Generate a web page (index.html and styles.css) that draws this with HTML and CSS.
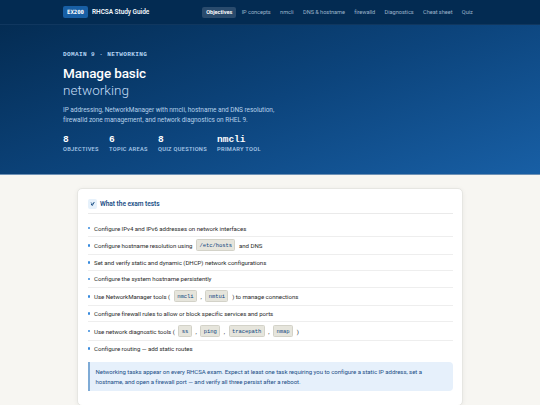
FILE: index.html
```html
<!DOCTYPE html>
<html lang="en">
<head>
    <meta charset="UTF-8">
    <meta name="viewport" content="width=device-width, initial-scale=1.0">
    <title>RHCSA Study Guide - Manage basic networking</title>
    <link rel="stylesheet" href="styles.css">
</head>
<body>
    <nav class="topbar">
        <div class="topbar-inner">
            <span class="badge">EX200</span>
            <span class="brand">RHCSA Study Guide</span>
            <div class="nav-links">
                <a class="active">Objectives</a>
                <a>IP concepts</a>
                <a>nmcli</a>
                <a>DNS &amp; hostname</a>
                <a>firewalld</a>
                <a>Diagnostics</a>
                <a>Cheat sheet</a>
                <a>Quiz</a>
            </div>
        </div>
    </nav>

    <header class="hero">
        <div class="hero-inner">
            <div class="eyebrow">DOMAIN 9 · NETWORKING</div>
            <h1>Manage basic<br><span>networking</span></h1>
            <p>IP addressing, NetworkManager with nmcli, hostname and DNS resolution,<br>firewalld zone management, and network diagnostics on RHEL 9.</p>
            <div class="stats">
                <div class="stat"><b>8</b><small>OBJECTIVES</small></div>
                <div class="stat"><b>6</b><small>TOPIC AREAS</small></div>
                <div class="stat"><b>8</b><small>QUIZ QUESTIONS</small></div>
                <div class="stat"><b>nmcli</b><small>PRIMARY TOOL</small></div>
            </div>
        </div>
    </header>

    <main class="card">
        <div class="card-head">
            <span class="check">
                <svg viewBox="0 0 10 10"><path d="M2 5.4 4.1 8.2 7.8 1.8M2 2.8 4.1 5.2"/></svg>
            </span>
            <h2>What the exam tests</h2>
        </div>
        <ul class="objectives">
            <li>Configure IPv4 and IPv6 addresses on network interfaces</li>
            <li class="tall">Configure hostname resolution using <code>/etc/hosts</code> and DNS</li>
            <li>Set and verify static and dynamic (DHCP) network configurations</li>
            <li>Configure the system hostname persistently</li>
            <li class="tall">Use NetworkManager tools ( <code>nmcli</code> , <code>nmtui</code> ) to manage connections</li>
            <li>Configure firewall rules to allow or block specific services and ports</li>
            <li class="tall">Use network diagnostic tools ( <code>ss</code> , <code>ping</code> , <code>tracepath</code> , <code>nmap</code> )</li>
            <li>Configure routing — add static routes</li>
        </ul>
        <div class="callout">Networking tasks appear on every RHCSA exam. Expect at least one task requiring you to configure a static IP address, set a<br>hostname, and open a firewall port — and verify all three persist after a reboot.</div>
    </main>
</body>
</html>
```
FILE: styles.css
```css
* {
    box-sizing: border-box;
}
body {
    margin: 0;
    background: #f7f6f2;
    font-family: Roboto, "Liberation Sans", sans-serif;
    font-size: 6.1px;
    letter-spacing: -0.05px;
    color: #2b2b2b;
}
.topbar {
    height: 25px;
    background: #032b52;
    border-bottom: 1px solid #10375f;
}
.topbar-inner,
.hero-inner {
    width: 414px;
    margin: 0 auto;
}
.topbar-inner {
    display: flex;
    align-items: center;
    height: 24px;
}
.badge {
    width: 25px;
    height: 12px;
    border-radius: 2px;
    background: #185fa5;
    color: white;
    font: bold 5.7px/12px "DejaVu Sans Mono", monospace;
    text-align: center;
}
.brand {
    margin-left: 4px;
    color: #f0f5fa;
    font-size: 6.5px;
    font-weight: 600;
}
.nav-links {
    display: flex;
    gap: 1px;
    margin-left: auto;
}
.nav-links a {
    height: 11px;
    padding: 0 4.2px;
    border-radius: 2px;
    color: #9bb3ca;
    font-size: 5.65px;
    line-height: 11.5px;
}
.nav-links .active {
    background: #2a4b6d;
    color: white;
    font-weight: 600;
}
.hero {
    height: 150px;
    padding-top: 25.5px;
    background: linear-gradient(160deg, #042c53 0%, #0c447c 50%, #185fa5 100%);
    border-bottom: 1px solid #6e91b5;
}
.eyebrow {
    height: 8px;
    color: #b5d4f4;
    font: bold 6.1px/8px "Liberation Mono", monospace;
    letter-spacing: 0.36px;
}
h1 {
    margin: 6.5px 0 0;
    color: white;
    font-size: 13.5px;
    font-weight: 500;
    line-height: 17px;
    letter-spacing: -0.13px;
}
h1 span {
    color: #c4dcf5;
    font-weight: 300;
    letter-spacing: 0.05px;
}
.hero p {
    margin: 5.5px 0 0;
    color: #b5d0ea;
    font-size: 6.5px;
    line-height: 10px;
    letter-spacing: -0.04px;
}
.stats {
    display: flex;
    gap: 10.2px;
    margin-top: 9.5px;
}
.stat b {
    display: block;
    color: white;
    font: bold 9.5px/11px "Liberation Mono", monospace;
}
.stat small {
    display: block;
    color: #a5c5e5;
    font-size: 5.7px;
    font-weight: 600;
    line-height: 8px;
    letter-spacing: 0.28px;
}
.card {
    width: 386px;
    margin: 13px auto 0;
    height: 218px;
    padding: 7px 9.5px;
    background: white;
    border: 1px solid #e6e6e2;
    border-radius: 5px;
    box-shadow: 0 1px 5px rgba(0, 0, 0, 0.06);
}
.card-head {
    display: flex;
    align-items: center;
    height: 17.5px;
    border-bottom: 1px solid #eaeaea;
}
.check {
    width: 9.5px;
    height: 9.5px;
    margin: -1px 3px 0 0;
    border-radius: 2px;
    background: #e6f1fb;
}
.check svg {
    display: block;
    width: 5.5px;
    margin: 2px auto;
    fill: none;
    stroke: #0c447c;
    stroke-width: 1.7;
}
h2 {
    margin: 0;
    color: #1b4f87;
    font-size: 6.6px;
    font-weight: 600;
}
.objectives {
    margin: 7px 0 0;
    padding: 0;
    list-style: none;
}
.objectives li {
    display: flex;
    align-items: center;
    gap: 3.8px;
    height: 16.2px;
    border-bottom: 1px solid #eeeeee;
    white-space: nowrap;
}
.objectives li::before {
    content: "";
    width: 2.8px;
    height: 2.8px;
    border-radius: 50%;
    background: #378add;
}
.objectives .tall {
    height: 18.5px;
}
.objectives li:last-child {
    border-bottom: none;
}
code {
    height: 12px;
    padding: 0 2.3px;
    border: 1px solid #d3d2c8;
    border-radius: 1.5px;
    background: #e6e5dc;
    color: #0c447c;
    font: 5.5px/11px "Liberation Mono", monospace;
}
.callout {
    height: 29px;
    margin-top: 5.5px;
    padding: 5px 6px;
    border-left: 2px solid #7fabd6;
    border-radius: 0 4px 4px 0;
    background: #e6f0fb;
    color: #1b4f87;
    font-size: 6.05px;
    line-height: 9.4px;
    white-space: nowrap;
}
```
